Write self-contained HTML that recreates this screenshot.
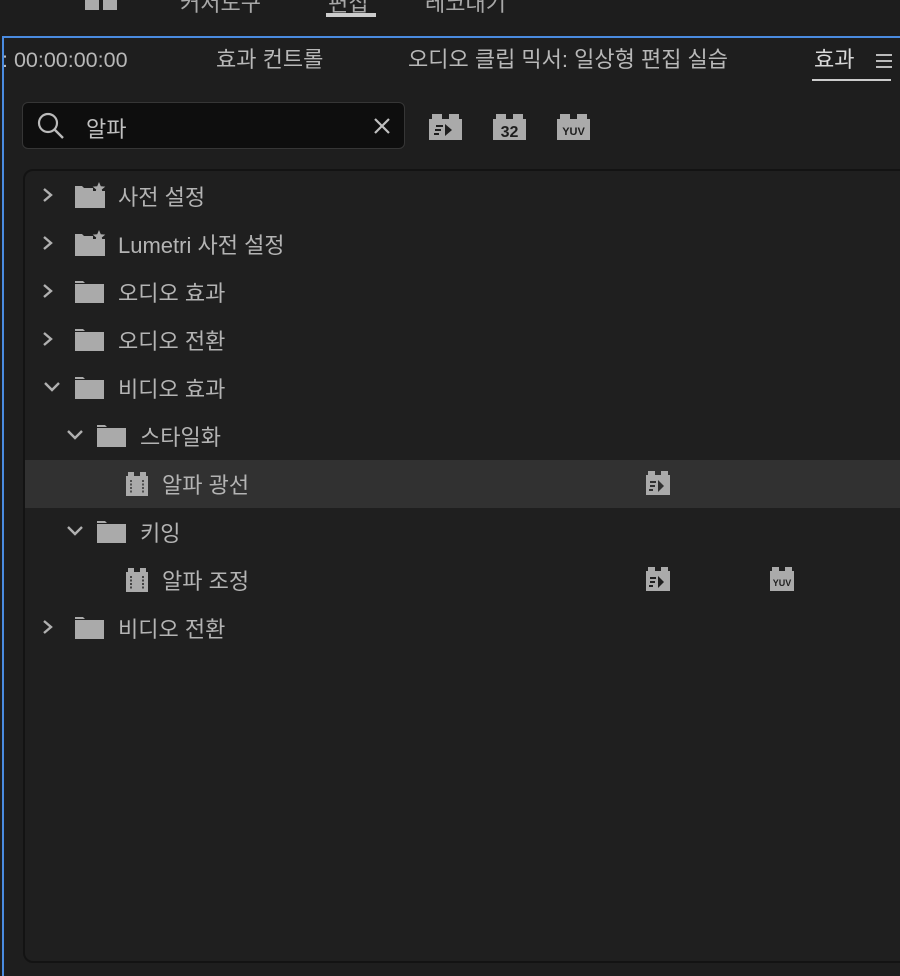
<!DOCTYPE html>
<html><head><meta charset="utf-8"><style>
body{margin:0;width:900px;height:976px;background:#1d1d1d;overflow:hidden;position:relative;font-family:"Liberation Sans","Noto Sans CJK KR",sans-serif;color:#b4b4b4}
.abs{position:absolute}
.top{font-size:22px;color:#a8a8a8;top:-14px}
.panel{left:2px;top:36px;width:900px;height:940px;border-top:2px solid #4a8be0;border-left:2px solid #4a8be0;background:#1e1e1e;box-sizing:border-box}
.tab{top:45px;font-size:22px;color:#b8b8b8;line-height:30px}
.search{left:22px;top:102px;width:383px;height:47px;background:#0e0e0e;border:1px solid #363636;border-radius:6px;box-sizing:border-box}
.list{left:23px;top:169px;width:900px;height:794px;border:2px solid #131313;border-radius:10px;box-sizing:border-box;background:#1f1f1f}
.row{position:absolute;left:0;width:900px;height:48px;font-size:22px;color:#b4b4b4}
.row span{position:absolute;top:9px}
svg{position:absolute}
</style></head><body>
<div class="abs top" style="left:85px"><svg width="34" height="24" style="left:0;top:14px"><rect x="0" y="0" width="14" height="10" fill="#aaa"/><rect x="18" y="0" width="14" height="10" fill="#aaa"/></svg></div>
<div class="abs top" style="left:180px">커서도구</div>
<div class="abs top" style="left:328px">편집</div>
<div class="abs" style="left:326px;top:13px;width:50px;height:4px;background:#ccc"></div>
<div class="abs top" style="left:425px">레코대기</div>
<div class="abs panel"></div>
<div class="abs tab" style="left:2px;font-size:21.5px">: 00:00:00:00</div>
<div class="abs tab" style="left:216px">효과 컨트롤</div>
<div class="abs tab" style="left:408px">오디오 클립 믹서: 일상형 편집 실습</div>
<div class="abs tab" style="left:814px;color:#d8d8d8">효과</div>
<div class="abs" style="left:812px;top:79px;width:79px;height:2px;background:#ccc"></div>
<div class="abs" style="left:876px;top:54px;width:16px;height:2px;background:#bbb;box-shadow:0 6px 0 #bbb,0 12px 0 #bbb"></div>
<div class="abs search"></div>
<svg style="left:36px;top:111px" width="30" height="30"><circle cx="12" cy="12" r="9" fill="none" stroke="#bbb" stroke-width="2.2"/><line x1="18.5" y1="18.5" x2="27" y2="27" stroke="#bbb" stroke-width="2.4"/></svg>
<div class="abs" style="left:86px;top:112px;font-size:22px;color:#c0c0c0">알파</div>
<svg style="left:373px;top:117px" width="18" height="18"><path d="M2 2L16 16M16 2L2 16" stroke="#c0c0c0" stroke-width="2.2"/></svg>
<svg style="left:429px;top:114px" width="34" height="26"><path d="M3 0h10v5h7v-5h10v5h3v21h-33v-21h3z" fill="#aaa"/><path d="M7 12h7M6 16h6M5 20h5" stroke="#1e1e1e" stroke-width="2"/><path d="M16 10l7 6-7 6z" fill="#1e1e1e"/></svg>
<svg style="left:493px;top:114px" width="34" height="26"><path d="M3 0h10v5h7v-5h10v5h3v21h-33v-21h3z" fill="#aaa"/><text x="16.5" y="23" font-size="16" font-weight="bold" text-anchor="middle" fill="#1e1e1e" font-family="Liberation Sans">32</text></svg>
<svg style="left:557px;top:114px" width="34" height="26"><path d="M3 0h10v5h7v-5h10v5h3v21h-33v-21h3z" fill="#aaa"/><text x="16.5" y="21" font-size="11" text-anchor="middle" fill="#1e1e1e" font-family="Liberation Sans" font-weight="bold">YUV</text></svg>
<div class="abs list"></div>
<div class="abs" style="left:25px;top:460px;width:875px;height:48px;background:#313131"></div>
<div class="abs" style="left:0;top:0;width:900px;height:976px">
<div class="row" style="top:171px"><svg style="left:42px;top:16px" width="12" height="16"><path d="M2 2l7 6-7 6" fill="none" stroke="#b0b0b0" stroke-width="2.4"/></svg><svg style="left:75px;top:11px" width="32" height="26"><path d="M0 4h7l2 2h9v3h-4v17h-14z M0 9h30v17h-30z" fill="#aaa"/><path d="M24 0l1.8 4.3 4.5.3-3.5 2.9 1.1 4.4-3.9-2.4-3.9 2.4 1.1-4.4-3.5-2.9 4.5-.3z" fill="#aaa"/></svg><span style="left:118px">사전 설정</span></div>
<div class="row" style="top:219px"><svg style="left:42px;top:16px" width="12" height="16"><path d="M2 2l7 6-7 6" fill="none" stroke="#b0b0b0" stroke-width="2.4"/></svg><svg style="left:75px;top:11px" width="32" height="26"><path d="M0 4h7l2 2h9v3h-4v17h-14z M0 9h30v17h-30z" fill="#aaa"/><path d="M24 0l1.8 4.3 4.5.3-3.5 2.9 1.1 4.4-3.9-2.4-3.9 2.4 1.1-4.4-3.5-2.9 4.5-.3z" fill="#aaa"/></svg><span style="left:118px">Lumetri 사전 설정</span></div>
<div class="row" style="top:267px"><svg style="left:42px;top:16px" width="12" height="16"><path d="M2 2l7 6-7 6" fill="none" stroke="#b0b0b0" stroke-width="2.4"/></svg><svg style="left:75px;top:14px" width="30" height="22"><path d="M0 0h8l2 2h-10z M0 3h29v19h-29z" fill="#aaa"/></svg><span style="left:118px">오디오 효과</span></div>
<div class="row" style="top:315px"><svg style="left:42px;top:16px" width="12" height="16"><path d="M2 2l7 6-7 6" fill="none" stroke="#b0b0b0" stroke-width="2.4"/></svg><svg style="left:75px;top:14px" width="30" height="22"><path d="M0 0h8l2 2h-10z M0 3h29v19h-29z" fill="#aaa"/></svg><span style="left:118px">오디오 전환</span></div>
<div class="row" style="top:363px"><svg style="left:43px;top:18px" width="18" height="12"><path d="M2 2l7 7 7-7" fill="none" stroke="#b0b0b0" stroke-width="2.4"/></svg><svg style="left:75px;top:14px" width="30" height="22"><path d="M0 0h8l2 2h-10z M0 3h29v19h-29z" fill="#aaa"/></svg><span style="left:118px">비디오 효과</span></div>
<div class="row" style="top:411px"><svg style="left:66px;top:18px" width="18" height="12"><path d="M2 2l7 7 7-7" fill="none" stroke="#b0b0b0" stroke-width="2.4"/></svg><svg style="left:97px;top:14px" width="30" height="22"><path d="M0 0h8l2 2h-10z M0 3h29v19h-29z" fill="#aaa"/></svg><span style="left:140px">스타일화</span></div>
<div class="row" style="top:459px"><svg style="left:126px;top:13px" width="22" height="24"><path d="M2 0h6v4h6v-4h6v4h2v20h-22v-20h2z" fill="#aaa"/><path d="M5 8v13M17 8v13" stroke="#313131" stroke-width="1.5" stroke-dasharray="2 1.5"/></svg><span style="left:162px">알파 광선</span><svg style="left:646px;top:12px" width="24" height="24"><path d="M2 0h7v4h6v-4h7v4h2v20h-24v-20h2z" fill="#aaa"/><path d="M4 11h6M4 15h5M3 19h4" stroke="#313131" stroke-width="2"/><path d="M12 9l6 6-6 6z" fill="#313131"/></svg></div>
<div class="row" style="top:507px"><svg style="left:66px;top:18px" width="18" height="12"><path d="M2 2l7 7 7-7" fill="none" stroke="#b0b0b0" stroke-width="2.4"/></svg><svg style="left:97px;top:14px" width="30" height="22"><path d="M0 0h8l2 2h-10z M0 3h29v19h-29z" fill="#aaa"/></svg><span style="left:140px">키잉</span></div>
<div class="row" style="top:555px"><svg style="left:126px;top:13px" width="22" height="24"><path d="M2 0h6v4h6v-4h6v4h2v20h-22v-20h2z" fill="#aaa"/><path d="M5 8v13M17 8v13" stroke="#1f1f1f" stroke-width="1.5" stroke-dasharray="2 1.5"/></svg><span style="left:162px">알파 조정</span><svg style="left:646px;top:12px" width="24" height="24"><path d="M2 0h7v4h6v-4h7v4h2v20h-24v-20h2z" fill="#aaa"/><path d="M4 11h6M4 15h5M3 19h4" stroke="#1f1f1f" stroke-width="2"/><path d="M12 9l6 6-6 6z" fill="#1f1f1f"/></svg><svg style="left:770px;top:12px" width="24" height="24"><path d="M2 0h7v4h6v-4h7v4h2v20h-24v-20h2z" fill="#aaa"/><text x="12" y="19" font-size="9" text-anchor="middle" fill="#1f1f1f" font-family="Liberation Sans" font-weight="bold">YUV</text></svg></div>
<div class="row" style="top:603px"><svg style="left:42px;top:16px" width="12" height="16"><path d="M2 2l7 6-7 6" fill="none" stroke="#b0b0b0" stroke-width="2.4"/></svg><svg style="left:75px;top:14px" width="30" height="22"><path d="M0 0h8l2 2h-10z M0 3h29v19h-29z" fill="#aaa"/></svg><span style="left:118px">비디오 전환</span></div>
</div>
</body></html>
